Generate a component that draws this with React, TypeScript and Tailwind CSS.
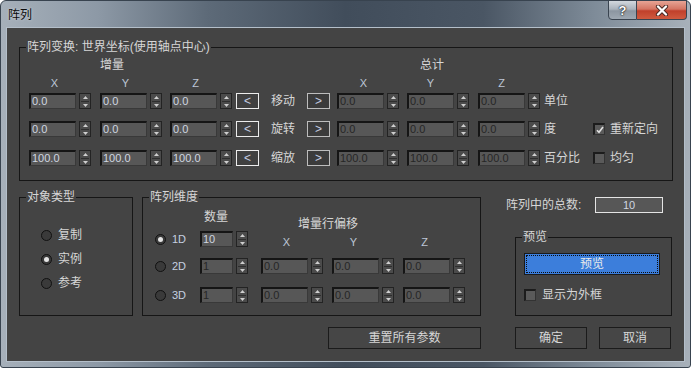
import React from "react";

const LBL = "text-[12px] leading-[14px] text-[#d6d6d6] whitespace-nowrap";
const XYZ = "w-[47px] shrink-0 text-center text-[11px] leading-[14px] text-[#bcc6d6]";

function Spinner() {
  return (
    <div className="ml-[3px] w-[12px] h-[16px] shrink-0 border border-[#232323] bg-[#4b4b4b] flex flex-col items-center justify-center">
      <svg width="5" height="3" viewBox="0 0 5 3">
        <path d="M2.5 0L5 3H0z" fill="#cfcfcf" />
      </svg>
      <div className="w-[8px] h-px my-[2px] bg-[#2e2e2e]" />
      <svg width="5" height="3" viewBox="0 0 5 3">
        <path d="M0 0H5L2.5 3z" fill="#cfcfcf" />
      </svg>
    </div>
  );
}

function Num({ v, dim, narrow }: { v: string; dim?: boolean; narrow?: boolean }) {
  return (
    <div
      className={`${narrow ? "w-[33px]" : "w-[47px]"} h-[16px] shrink-0 bg-[#575757] border-t-2 border-l-2 border-r border-b border-t-[#151515] border-l-[#151515] border-r-[#393939] border-b-[#393939] pl-[1px] flex items-center text-[11px] leading-none ${
        dim ? "text-[#262626]" : "text-[#cfd6e0]"
      }`}
    >
      {v}
    </div>
  );
}

function Spin({ v, dim, className }: { v: string; dim?: boolean; className?: string }) {
  return (
    <div className={`flex items-center shrink-0 ${className ?? ""}`}>
      <Num v={v} dim={dim} />
      <Spinner />
    </div>
  );
}

function ArrowBtn({ c, light }: { c: string; light?: boolean }) {
  return (
    <div
      className={`w-[23px] h-[16px] shrink-0 border ${
        light ? "border-[#ececec] bg-[#404040]" : "border-[#bdbdbd] bg-[#3b3b3b]"
      } flex items-center justify-center text-[12px] leading-none text-[#c4cde0]`}
    >
      {c}
    </div>
  );
}

function Check({ on }: { on?: boolean }) {
  return (
    <div className="w-[12px] h-[12px] shrink-0 border-t-2 border-l-2 border-r border-b border-t-[#1c1c1c] border-l-[#1c1c1c] border-r-[#333333] border-b-[#333333] bg-[#5a5a5a] flex items-center justify-center">
      {on && (
        <svg width="8" height="8" viewBox="0 0 8 8">
          <path d="M1 4.2L3 6.3L7 1" stroke="#e2e2e2" strokeWidth="1.6" fill="none" />
        </svg>
      )}
    </div>
  );
}

function Radio({ on }: { on?: boolean }) {
  return (
    <div className="w-[11px] h-[11px] shrink-0 rounded-full border border-[#111111] bg-[#3a3a3a] flex items-center justify-center">
      {on && <div className="w-[5px] h-[5px] rounded-full bg-[#e4e4e4]" />}
    </div>
  );
}

function Group({
  title,
  className,
  children,
}: {
  title: string;
  className: string;
  children?: React.ReactNode;
}) {
  return (
    <div className={`relative shrink-0 border border-[#161616] ${className}`}>
      <span className={`absolute -top-[8px] left-[6px] px-[1px] bg-[#444444] ${LBL}`}>{title}</span>
      {children}
    </div>
  );
}

function Btn({ label, className }: { label: string; className: string }) {
  return (
    <div
      className={`h-[22px] shrink-0 border border-[#1b1b1b] bg-[#464646] flex items-center justify-center ${LBL} ${className}`}
    >
      {label}
    </div>
  );
}

function TransformRow({
  a,
  label,
  unit,
  className,
  check,
}: {
  a: string;
  label: string;
  unit: string;
  className: string;
  check?: React.ReactNode;
}) {
  return (
    <div className={`flex items-center h-[16px] pl-[9px] ${className}`}>
      <Spin v={a} />
      <Spin v={a} className="ml-[9px]" />
      <Spin v={a} className="ml-[8px]" />
      <div className="ml-[4px]">
        <ArrowBtn c="<" light />
      </div>
      <div className={`w-[48px] pl-[12px] shrink-0 ${LBL}`}>{label}</div>
      <ArrowBtn c=">" />
      <Spin v={a} dim className="ml-[7px]" />
      <Spin v={a} dim className="ml-[8px]" />
      <Spin v={a} dim className="ml-[9px]" />
      <div className={`ml-[4px] w-[49px] shrink-0 ${LBL}`}>{unit}</div>
      {check}
    </div>
  );
}

export default function App() {
  return (
    <div className="w-[691px] h-[368px] overflow-hidden bg-white font-['Liberation_Sans','Noto_Sans_CJK_SC',sans-serif]">
      <div className="w-[691px] h-[368px] flex flex-col rounded-t-[6px] rounded-b-[3px] border border-[#38434f] bg-[linear-gradient(90deg,#a6b0ba_0%,#8d99a6_14%,#5d6a78_30%,#414d5b_50%,#4a5664_70%,#7e8b98_86%,#a8b1ba_100%)]">
        {/* title bar */}
        <div className="h-[27px] shrink-0 flex items-start">
          <span className="pl-[7px] pt-[7px] text-[12px] leading-[14px] text-[#0c0c0c] [text-shadow:0_0_3px_rgba(255,255,255,0.55)]">
            阵列
          </span>
          <div className="ml-auto mr-[3px] -mt-px flex">
            <div className="w-[29px] h-[20px] rounded-bl-[4px] border border-[#3a4450] bg-[linear-gradient(180deg,#d3d8de_0%,#aab3bc_45%,#8c96a1_55%,#9ea8b2_100%)] flex items-center justify-center text-[13px] font-bold leading-none text-white [text-shadow:0_0_2px_#000,0_0_1px_#000]">
              ?
            </div>
            <div className="w-[50px] h-[20px] rounded-br-[4px] border border-l-0 border-[#3a4450] bg-[linear-gradient(180deg,#e7a495_0%,#d47563_45%,#c0402b_55%,#cf5a3f_100%)] flex items-center justify-center">
              <svg width="14" height="11" viewBox="0 0 14 11">
                <path d="M3 1.5L11 9.5M11 1.5L3 9.5" stroke="#4a2a24" strokeWidth="4.2" strokeLinecap="round" />
                <path d="M3 1.5L11 9.5M11 1.5L3 9.5" stroke="#ffffff" strokeWidth="2.3" strokeLinecap="round" />
              </svg>
            </div>
          </div>
        </div>

        {/* client */}
        <div className="ml-[6px] w-[677px] h-[333px] shrink-0 bg-[#444444] outline outline-[#b4bfca] pl-[12px] pt-[19px] flex flex-col">
          <Group title="阵列变换: 世界坐标(使用轴点中心)" className="w-[654px] h-[134px]">
            <div className="flex flex-col">
              <div className="mt-[10px] h-[14px] flex">
                <span className={`ml-[80px] ${LBL}`}>增量</span>
                <span className={`ml-[296px] ${LBL}`}>总计</span>
              </div>
              <div className="mt-[4px] h-[14px] flex pl-[11px]">
                <span className={XYZ}>X</span>
                <span className={`ml-[24px] ${XYZ}`}>Y</span>
                <span className={`ml-[23px] ${XYZ}`}>Z</span>
                <span className={`ml-[121px] ${XYZ}`}>X</span>
                <span className={`ml-[20px] ${XYZ}`}>Y</span>
                <span className={`ml-[24px] ${XYZ}`}>Z</span>
              </div>
              <TransformRow a="0.0" label="移动" unit="单位" className="mt-[3px]" />
              <TransformRow
                a="0.0"
                label="旋转"
                unit="度"
                className="mt-[12px]"
                check={
                  <div className="flex items-center">
                    <Check on />
                    <span className={`ml-[5px] ${LBL}`}>重新定向</span>
                  </div>
                }
              />
              <TransformRow
                a="100.0"
                label="缩放"
                unit="百分比"
                className="mt-[13px]"
                check={
                  <div className="flex items-center">
                    <Check />
                    <span className={`ml-[5px] ${LBL}`}>均匀</span>
                  </div>
                }
              />
            </div>
          </Group>

          {/* bottom section */}
          <div className="mt-[16px] flex items-start">
            <div className="w-[462px] flex flex-col shrink-0">
              <div className="flex">
                <Group title="对象类型" className="w-[114px] h-[119px]">
                  <div className="flex flex-col pl-[21px]">
                    <div className="mt-[30px] h-[14px] flex items-center">
                      <Radio />
                      <span className={`ml-[6px] ${LBL}`}>复制</span>
                    </div>
                    <div className="mt-[10px] h-[14px] flex items-center">
                      <Radio on />
                      <span className={`ml-[6px] ${LBL}`}>实例</span>
                    </div>
                    <div className="mt-[10px] h-[14px] flex items-center">
                      <Radio />
                      <span className={`ml-[6px] ${LBL}`}>参考</span>
                    </div>
                  </div>
                </Group>
                <Group title="阵列维度" className="ml-[9px] w-[339px] h-[119px]">
                  <div className="flex flex-col">
                    <div className="flex items-start">
                      <div className="flex flex-col pl-[12px] shrink-0">
                        <span className={`mt-[12px] ml-[49px] ${LBL}`}>数量</span>
                        <div className="mt-[7px] h-[16px] flex items-center">
                          <Radio on />
                          <span className="ml-[6px] w-[28px] shrink-0 text-[11px] leading-none text-[#c6d0e0]">1D</span>
                          <Num v="10" narrow />
                          <Spinner />
                        </div>
                      </div>
                      <div className="ml-[13px] flex flex-col">
                        <span className={`mt-[19px] ml-[37px] ${LBL}`}>增量行偏移</span>
                        <div className="mt-[4px] h-[14px] flex pl-[2px]">
                          <span className={XYZ}>X</span>
                          <span className={`ml-[20px] ${XYZ}`}>Y</span>
                          <span className={`ml-[24px] ${XYZ}`}>Z</span>
                        </div>
                      </div>
                    </div>
                    <div className="mt-[9px] h-[16px] flex items-center pl-[12px]">
                      <Radio />
                      <span className="ml-[6px] w-[28px] shrink-0 text-[11px] leading-none text-[#c6d0e0]">2D</span>
                      <Num v="1" narrow dim />
                      <Spinner />
                      <Spin v="0.0" dim className="ml-[13px]" />
                      <Spin v="0.0" dim className="ml-[9px]" />
                      <Spin v="0.0" dim className="ml-[9px]" />
                    </div>
                    <div className="mt-[13px] h-[16px] flex items-center pl-[12px]">
                      <Radio />
                      <span className="ml-[6px] w-[28px] shrink-0 text-[11px] leading-none text-[#c6d0e0]">3D</span>
                      <Num v="1" narrow dim />
                      <Spinner />
                      <Spin v="0.0" dim className="ml-[13px]" />
                      <Spin v="0.0" dim className="ml-[9px]" />
                      <Spin v="0.0" dim className="ml-[9px]" />
                    </div>
                  </div>
                </Group>
              </div>
              <Btn label="重置所有参数" className="mt-[11px] self-end w-[153px]" />
            </div>

            <div className="ml-[25px] w-[166px] flex flex-col shrink-0">
              <div className="h-[16px] flex items-center">
                <span className={`w-[89px] shrink-0 ${LBL}`}>阵列中的总数:</span>
                <div className="w-[68px] h-[16px] shrink-0 border border-[#e4e4e4] bg-[#575757] flex items-center justify-center text-[11px] leading-none text-[#cfd6e0]">
                  10
                </div>
              </div>
              <Group title="预览" className="mt-[24px] ml-[9px] w-[157px] h-[79px]">
                <div className="flex flex-col pl-[8px]">
                  <div className="mt-[15px] w-[136px] h-[22px] border border-[#1a1a1a] bg-[#3c7edb] p-[1px]">
                    <div className={`h-full border border-dotted border-[#0d0d0d] flex items-center justify-center ${LBL} text-[#eaeaea]`}>
                      预览
                    </div>
                  </div>
                  <div className="mt-[14px] h-[12px] flex items-center">
                    <Check />
                    <span className={`ml-[6px] ${LBL}`}>显示为外框</span>
                  </div>
                </div>
              </Group>
              <div className="mt-[11px] ml-[9px] flex">
                <Btn label="确定" className="w-[72px]" />
                <Btn label="取消" className="ml-[12px] w-[72px]" />
              </div>
            </div>
          </div>
        </div>
      </div>
    </div>
  );
}
